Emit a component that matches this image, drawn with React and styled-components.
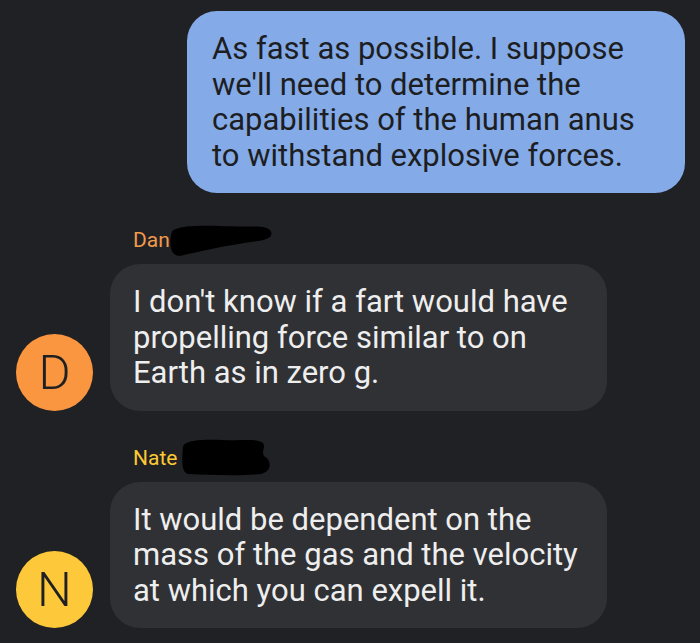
import styled, { createGlobalStyle } from 'styled-components';

const GlobalStyle = createGlobalStyle`
	html, body {
		margin: 0;
		padding: 0;
		background: #202124;
	}
	body {
		font-family: Roboto, 'Noto Sans', sans-serif;
		-webkit-font-smoothing: antialiased;
	}
`;

const Thread = styled.div`
	display: flex;
	flex-direction: column;
	gap: 36px;
	padding: 11px 15px 17px 16px;
	min-height: 643px;
	box-sizing: border-box;
`;

const OutgoingRow = styled.div`
	display: flex;
	justify-content: flex-end;
`;

const Bubble = styled.div`
	box-sizing: border-box;
	width: ${ ( { width } ) => width }px;
	padding: 20px ${ ( { padRight } ) => padRight }px 20px ${ ( { padLeft } ) => padLeft }px;
	border-radius: 30px;
	font-size: 31px;
	line-height: 35.5px;
	background: ${ ( { outgoing } ) => outgoing ? '#84aae8' : '#303134' };
	color: ${ ( { outgoing } ) => outgoing ? '#1d1e21' : '#eeeeee' };
`;

const IncomingGroup = styled.div`
	display: grid;
	grid-template-columns: 77px auto;
	column-gap: 17px;
	align-items: end;
`;

const Avatar = styled.div`
	width: 77px;
	height: 77px;
	border-radius: 50%;
	background: ${ ( { color } ) => color };
	color: #1f2024;
	display: flex;
	align-items: center;
	justify-content: center;
	font-size: 49px;
	font-weight: 300;
	line-height: 1;
`;

const Column = styled.div`
	display: flex;
	flex-direction: column;
	gap: 12px;
`;

const SenderName = styled.div`
	position: relative;
	padding-left: 23px;
	font-size: 21px;
	line-height: 23px;
	color: ${ ( { color } ) => color };
`;

const Redaction = styled.svg`
	position: absolute;
	left: ${ ( { left } ) => left }px;
	top: ${ ( { top } ) => top }px;
`;

const DanBlob = () => (
	<Redaction left={ 59 } top={ -5 } width="103" height="33" viewBox="0 0 102 32">
		<path
			fill="#000"
			d="M3 7 C 8 0, 40 1, 62 2 C 82 3, 97 0, 101 7 C 104 15, 92 16, 72 19 C 52 22, 30 27, 12 31 C 2 33, -1 20, 3 7 Z"
		/>
	</Redaction>
);

const NateBlob = () => (
	<Redaction left={ 71 } top={ -9 } width="90" height="38" viewBox="0 0 90 38">
		<path
			fill="#000"
			d="M2 9 C 3 2, 22 1, 42 2 C 60 3, 76 0, 82 5 C 85 9, 80 14, 83 18 C 91 22, 91 34, 80 36 C 60 38, 30 37, 7 36 C 0 35, 1 20, 2 9 Z"
		/>
	</Redaction>
);

const Incoming = ( { initial, avatarColor, name, nameColor, Blob, children } ) => (
	<IncomingGroup>
		<Avatar color={ avatarColor }>{ initial }</Avatar>
		<Column>
			<SenderName color={ nameColor }>
				{ name }
				<Blob />
			</SenderName>
			<Bubble width={ 497 } padLeft={ 23 } padRight={ 14 }>{ children }</Bubble>
		</Column>
	</IncomingGroup>
);

export default function App() {
	return (
		<>
			<GlobalStyle />
			<Thread>
				<OutgoingRow>
					<Bubble outgoing width={ 498 } padLeft={ 25 } padRight={ 25 }>
						As fast as possible. I suppose we'll need to determine the capabilities of the human anus to withstand explosive forces.
					</Bubble>
				</OutgoingRow>
				<Incoming
					initial="D"
					avatarColor="#fa9640"
					name="Dan"
					nameColor="#f29a4c"
					Blob={ DanBlob }
				>
					I don't know if a fart would have propelling force similar to on Earth as in zero g.
				</Incoming>
				<Incoming
					initial="N"
					avatarColor="#fdc83a"
					name="Nate"
					nameColor="#fcc934"
					Blob={ NateBlob }
				>
					It would be dependent on the mass of the gas and the velocity at which you can expell it.
				</Incoming>
			</Thread>
		</>
	);
}
